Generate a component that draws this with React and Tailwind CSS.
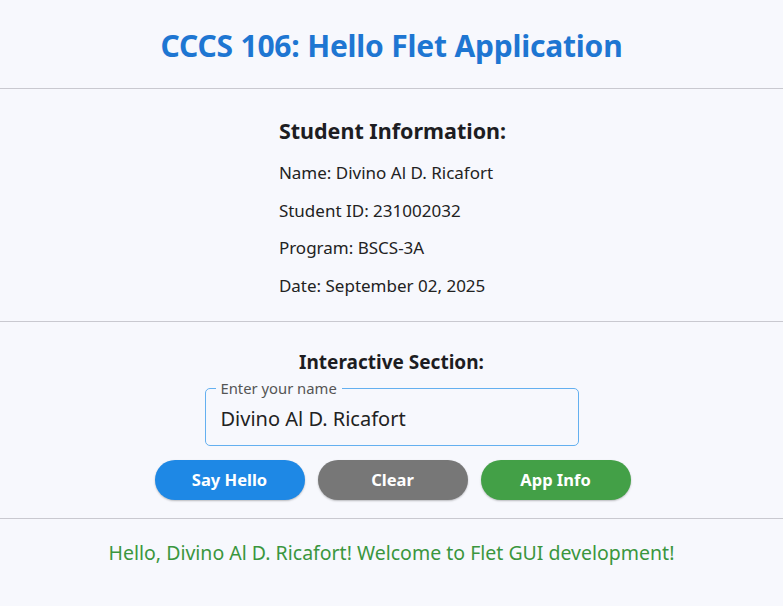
import React from 'react';

const font = { fontFamily: '"Noto Sans", "Liberation Sans", sans-serif' };

function Divider() {
  return <div className="h-px w-full bg-[#c9c9d0]" />;
}

export default function App() {
  const name = 'Divino Al D. Ricafort';
  return (
    <div style={font} className="w-[783px] h-[606px] bg-[#f7f8fd] flex flex-col overflow-hidden">
      {/* header */}
      <div className="h-[88px] flex items-center justify-center pt-[2px]">
        <h1 className="text-[30px] font-bold text-[#1e76d2] tracking-[-0.2px]">CCCS 106: Hello Flet Application</h1>
      </div>
      <Divider />

      {/* student info */}
      <div className="h-[232px] flex justify-center pt-[28px] pl-[2px]">
        <div className="flex flex-col text-[#1d1d22]">
          <h2 className="text-[21.5px] font-bold leading-[28px] mb-[16px]">Student Information:</h2>
          <div className="flex flex-col gap-[13px] text-[17px] leading-[24.5px] text-[#222]">
            <span>Name: {name}</span>
            <span>Student ID: 231002032</span>
            <span>Program: BSCS-3A</span>
            <span>Date: September 02, 2025</span>
          </div>
        </div>
      </div>
      <Divider />

      {/* interactive */}
      <div className="h-[196px] flex flex-col items-center pt-[27px]">
        <h2 className="text-[19px] font-bold text-[#1d1d22] leading-[26px]">Interactive Section:</h2>
        <div className="relative mt-[13px] w-[374px] h-[58px] rounded-[5px] border border-[#64b0f0] flex items-center px-[15px] pt-[3px]">
          <span className="absolute -top-[10px] left-[10px] px-[5px] bg-[#f7f8fd] text-[14.8px] leading-[18px] text-[#555]">Enter your name</span>
          <span className="text-[20px] text-[#222]">{name}</span>
        </div>
        <div className="flex gap-[13px] mt-[14px] pl-[2px]">
          <button className="w-[150px] h-[40px] rounded-full bg-[#1e88e5] text-white font-bold text-[16.5px] shadow-[0_1px_2px_rgba(0,0,0,0.25)]">Say Hello</button>
          <button className="w-[150px] h-[40px] rounded-full bg-[#777777] text-white font-bold text-[16.5px] shadow-[0_1px_2px_rgba(0,0,0,0.25)]">Clear</button>
          <button className="w-[150px] h-[40px] rounded-full bg-[#43a047] text-white font-bold text-[16.5px] shadow-[0_1px_2px_rgba(0,0,0,0.25)]">App Info</button>
        </div>
      </div>
      <Divider />

      {/* greeting */}
      <div className="flex justify-center pt-[19px]">
        <p className="text-[19.5px] text-[#3a963e]">Hello, {name}! Welcome to Flet GUI development!</p>
      </div>
    </div>
  );
}
